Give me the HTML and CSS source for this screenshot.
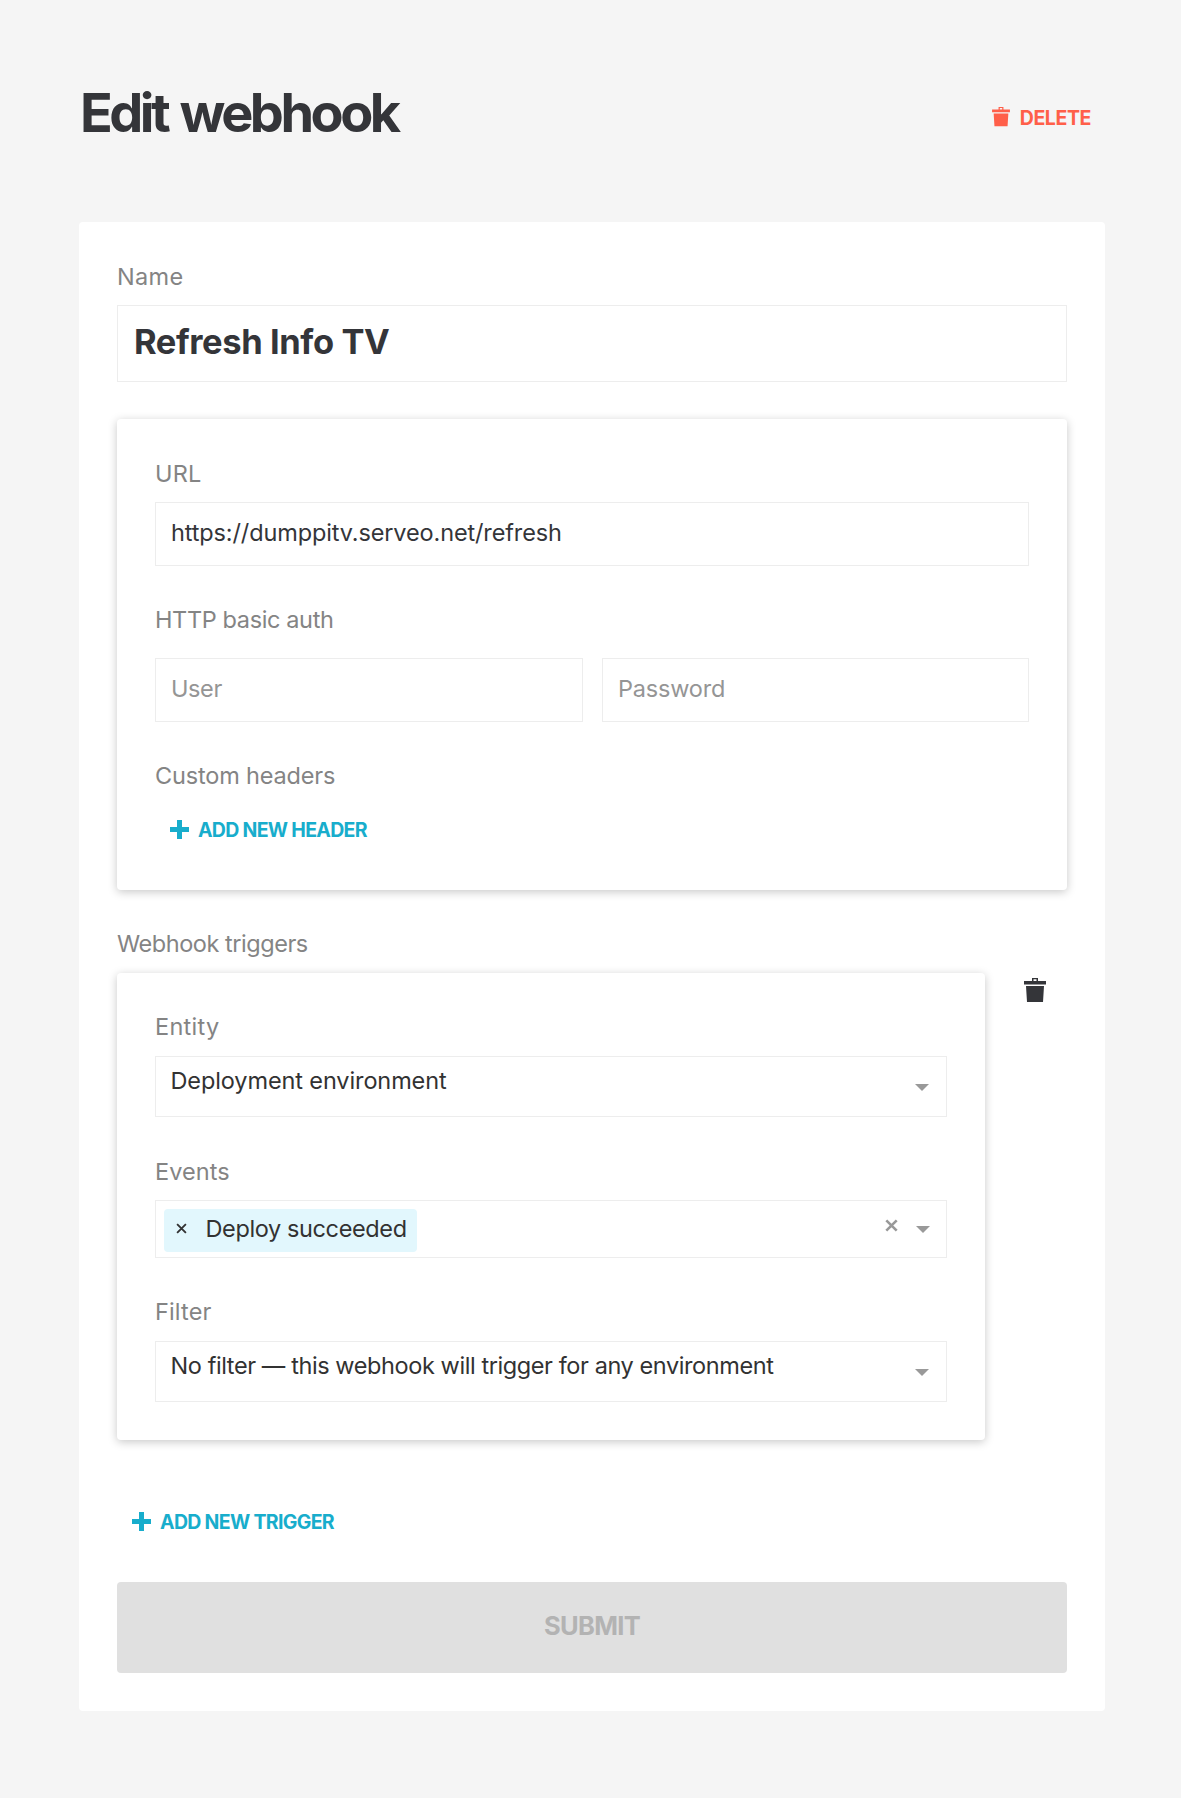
FILE: index.html
```
<!DOCTYPE html>
<html lang="en">
<head>
<meta charset="utf-8">
<title>Edit webhook</title>
<link rel="stylesheet" href="styles.css">
</head>
<body>
<svg class="defs" aria-hidden="true">
  <symbol id="trash" viewBox="0 0 22 24">
    <path fill-rule="evenodd" d="M8 0H14V3H22V6.5H0V3H8ZM9.5 1.3V3H12.5V1.3Z"/>
    <path d="M2 8H20L19 24H3Z"/>
  </symbol>
  <symbol id="plus" viewBox="0 0 19 19">
    <path d="M7 0H12V7H19V12H12V19H7V12H0V7H7Z"/>
  </symbol>
  <symbol id="cross" viewBox="0 0 13 13">
    <path d="M1.3 1.3L11.7 11.7M11.7 1.3L1.3 11.7"/>
  </symbol>
</svg>
<main class="page">
  <header class="header">
    <h1 class="title">Edit webhook</h1>
    <button class="link-button delete"><svg class="delete-icon" preserveAspectRatio="none"><use href="#trash"/></svg><span>DELETE</span></button>
  </header>
  <form class="card">
    <div class="label ls-name">Name</div>
    <div class="input input-name">Refresh Info TV</div>

    <section class="panel">
      <div class="label ls-url">URL</div>
      <div class="input ls-address">https://dumppitv.serveo.net/refresh</div>
      <div class="label label-auth">HTTP basic auth</div>
      <div class="auth">
        <div class="input placeholder ls-user">User</div>
        <div class="input placeholder ls-password">Password</div>
      </div>
      <div class="label label-headers">Custom headers</div>
      <button type="button" class="link-button add add-header"><svg class="plus"><use href="#plus"/></svg><span>ADD NEW HEADER</span></button>
    </section>

    <div class="label label-triggers">Webhook triggers</div>
    <div class="trigger">
      <section class="panel trigger-panel">
        <div class="label ls-entity">Entity</div>
        <div class="select ls-deployment"><span>Deployment environment</span><i class="arrow"></i></div>
        <div class="label label-events">Events</div>
        <div class="select multi">
          <span class="chip"><svg class="chip-x"><use href="#cross"/></svg><span>Deploy succeeded</span></span>
          <svg class="clear"><use href="#cross"/></svg>
          <i class="arrow"></i>
        </div>
        <div class="label label-filter">Filter</div>
        <div class="select select-filter"><span>No filter — this webhook will trigger for any environment</span><i class="arrow"></i></div>
      </section>
      <svg class="remove"><use href="#trash"/></svg>
    </div>

    <button type="button" class="link-button add add-trigger"><svg class="plus"><use href="#plus"/></svg><span>ADD NEW TRIGGER</span></button>
    <button type="button" class="submit" disabled>SUBMIT</button>
  </form>
</main>
</body>
</html>
```
FILE: styles.css
```
* { box-sizing: border-box; }

body {
  margin: 0;
  background: #f5f5f5;
  color: #343539;
  font: 400 23.5px/30px Inter, "Liberation Sans", sans-serif;
}

svg { display: block; flex: none; fill: currentColor; }
.defs { position: absolute; width: 0; height: 0; }

button {
  border: 0;
  padding: 0;
  background: none;
  font-family: inherit;
}

.page { padding: 83px 76px 87px 79px; }

.header {
  display: flex;
  justify-content: space-between;
  align-items: flex-start;
  height: 139px;
  padding: 0 14px 0 1px;
}

.title {
  margin: 0;
  font-size: 54px;
  line-height: 60px;
  font-weight: 700;
  letter-spacing: -3.5px;
  word-spacing: 3px;
}

.link-button {
  display: flex;
  align-items: center;
  height: 30px;
  font-size: 19.5px;
  line-height: 30px;
  font-weight: 700;
}

.link-button span { padding-top: 1px; }

.delete { gap: 10px; margin-top: 19px; color: #ff5f49; letter-spacing: -0.4px; }
.delete-icon { width: 18px; height: 19.5px; }

.card {
  display: flex;
  flex-direction: column;
  height: 1489px;
  padding: 40px 38px 38px;
  border-radius: 4px;
  background: #fff;
}

.label { height: 30px; margin: 0 0 13px; color: #848484; white-space: nowrap; }

.input {
  height: 64px;
  padding: 15px 16px;
  border: 1px solid #ededed;
  background: #fff;
}

.input-name {
  height: 77px;
  padding: 16px;
  font-size: 34.5px;
  line-height: 40px;
  font-weight: 700;
  letter-spacing: -0.41px;
}

.placeholder { color: #959595; }

.panel {
  height: 471px;
  margin-top: 37px;
  padding: 40px 38px;
  border-radius: 4px;
  background: #fff;
  box-shadow: 0 2px 10px rgba(0, 0, 0, .22);
}

.label-auth { margin: 39px 0 23px; letter-spacing: -0.37px; }
.auth { display: grid; grid-template-columns: 428px 427px; gap: 19px; }
.label-headers { margin: 39px 0 23px; letter-spacing: -0.17px; }

.add { gap: 9px; color: #18adcc; }
.plus { width: 19px; height: 19px; }
.add-header { margin-left: 15px; letter-spacing: -0.7px; }

.label-triggers { margin: 39px 0 14px; letter-spacing: -0.45px; }

.trigger { display: flex; align-items: flex-start; gap: 39px; }
.trigger-panel { width: 868px; height: 467px; margin: 0; padding-top: 39px; }
.remove { width: 22px; height: 24px; margin-top: 5px; }

.select {
  display: flex;
  justify-content: space-between;
  align-items: flex-start;
  height: 61px;
  padding: 9px 17px 0 14.5px;
  border: 1px solid #ededed;
  color: #323232;
  white-space: nowrap;
}

.trigger-panel .label { margin-bottom: 14px; }
.trigger-panel .label-events { margin: 40px 0 13px; letter-spacing: 0.05px; }
.trigger-panel .label-filter { margin-top: 39px; letter-spacing: 0.15px; }

.arrow {
  width: 14px;
  height: 7px;
  margin-top: 18px;
  background: #999;
  clip-path: polygon(0 0, 100% 0, 50% 100%);
}

.multi { height: 58px; padding: 8px 16px 0 8px; }
.multi .arrow { margin-top: 17px; }

.chip {
  display: flex;
  width: 253px;
  height: 43px;
  padding: 5px 0 0 12px;
  border-radius: 4px;
  background: #e2f7fd;
  letter-spacing: -0.38px;
}

.chip-x {
  width: 11px;
  height: 11px;
  margin: 9px 18.5px 0 0;
  stroke: #323232;
  stroke-width: 2.2;
}

.clear {
  width: 13px;
  height: 13px;
  margin: 10px 18px 0 auto;
  stroke: #999;
  stroke-width: 2.6;
}

.select-filter { letter-spacing: -0.41px; }

.add-trigger { margin: 66px 0 46px 15px; letter-spacing: -0.68px; }

.submit {
  height: 91px;
  padding-bottom: 4px;
  border-radius: 4px;
  background: #e0e0e0;
  color: #b3b3b3;
  font-size: 25.5px;
  font-weight: 700;
  letter-spacing: -0.68px;
}

.ls-name { letter-spacing: 0.3px; }
.ls-url { letter-spacing: 0.2px; }
.ls-address { padding-left: 15px; letter-spacing: -0.13px; }
.ls-user { padding-left: 15px; letter-spacing: -0.4px; }
.ls-password { padding-left: 15px; letter-spacing: -0.2px; }
.ls-entity { letter-spacing: 0.3px; }
.ls-deployment { letter-spacing: -0.11px; }
```
